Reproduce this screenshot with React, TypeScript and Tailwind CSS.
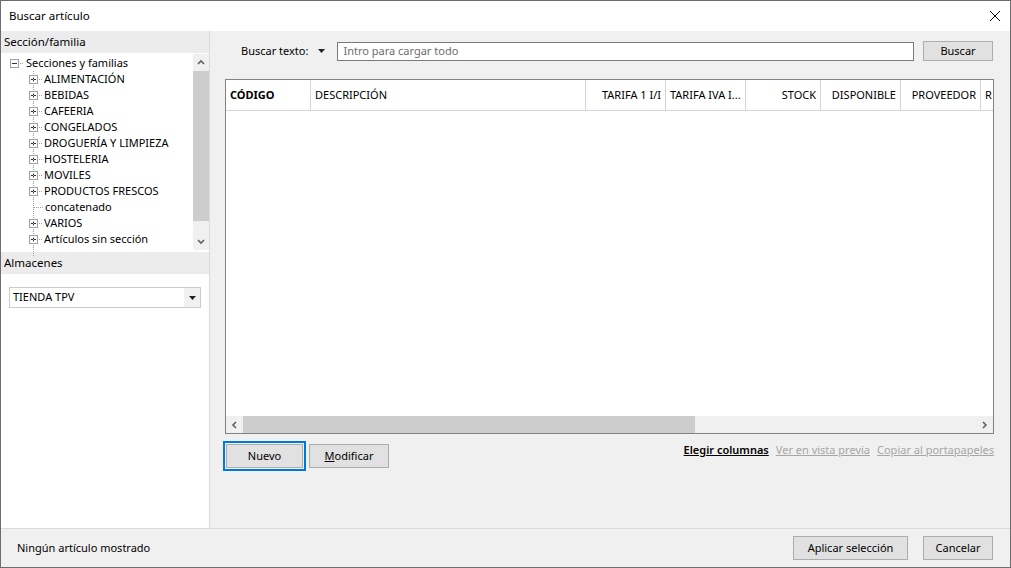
import React from "react";

const font = "font-['Segoe_UI','Noto_Sans',sans-serif]";

const treeItems: { label: string; leaf?: boolean }[] = [
  { label: "ALIMENTACIÓN" },
  { label: "BEBIDAS" },
  { label: "CAFEERIA" },
  { label: "CONGELADOS" },
  { label: "DROGUERÍA Y LIMPIEZA" },
  { label: "HOSTELERIA" },
  { label: "MOVILES" },
  { label: "PRODUCTOS FRESCOS" },
  { label: "concatenado", leaf: true },
  { label: "VARIOS" },
  { label: "Artículos sin sección" },
];

const columns: { label: string; w: string; align: "left" | "right"; bold?: boolean }[] = [
  { label: "CÓDIGO", w: "w-[85px]", align: "left", bold: true },
  { label: "DESCRIPCIÓN", w: "w-[275px]", align: "left" },
  { label: "TARIFA 1 I/I", w: "w-[80px]", align: "right" },
  { label: "TARIFA IVA I...", w: "w-[80px]", align: "left" },
  { label: "STOCK", w: "w-[75px]", align: "right" },
  { label: "DISPONIBLE", w: "w-[80px]", align: "right" },
  { label: "PROVEEDOR", w: "w-[80px]", align: "right" },
];

function Expander({ open }: { open?: boolean }) {
  return (
    <svg width="9" height="9" viewBox="0 0 9 9" className="shrink-0 block">
      <rect x="0.5" y="0.5" width="8" height="8" fill="#fff" stroke="#a0a0a0" />
      <line x1="2" y1="4.5" x2="7" y2="4.5" stroke="#333" />
      {!open && <line x1="4.5" y1="2" x2="4.5" y2="7" stroke="#333" />}
    </svg>
  );
}

function Chevron({ dir }: { dir: "up" | "down" | "left" | "right" }) {
  const d = {
    up: "M1 5 L4 2 L7 5",
    down: "M1 2 L4 5 L7 2",
    left: "M5 1 L2 4 L5 7",
    right: "M2 1 L5 4 L2 7",
  }[dir];
  return (
    <svg width="8" height="8" viewBox="0 0 8 8" className="block">
      <path d={d} fill="none" stroke="#606060" strokeWidth="1.6" />
    </svg>
  );
}

function Caret() {
  return (
    <svg width="7" height="4" viewBox="0 0 7 4" className="block">
      <path d="M0 0 L7 0 L3.5 4 Z" fill="#222" />
    </svg>
  );
}

function Tree() {
  return (
    <div className="flex h-[197px]">
      <div className="relative flex-1 pt-[2px] pl-[9px] text-[11px] text-black leading-[16px]">
        {/* root */}
        <div className="flex items-center h-4">
          <Expander open />
          <span className="w-[3px] border-t border-dotted border-[#a0a0a0] ml-[1px] mr-[3px]" />
          <span>Secciones y familias</span>
        </div>
        <div className="relative">
          <span className="absolute left-[23px] top-0 h-[185px] border-l border-dotted border-[#a0a0a0]" />
          {treeItems.map((it) => (
            <div key={it.label} className="flex items-center h-4 pl-[19px]">
              {it.leaf ? (
                <span className="w-[9px] ml-[5px] border-t border-dotted border-[#a0a0a0]" />
              ) : (
                <>
                  <Expander />
                  <span className="w-[3px] border-t border-dotted border-[#a0a0a0] ml-[1px]" />
                </>
              )}
              <span className="ml-[2px] bg-white relative">{it.label}</span>
            </div>
          ))}
        </div>
      </div>
      <div className="w-[16px] bg-[#f0f0f0] flex flex-col mt-[1px]">
        <div className="h-[17px] flex items-center justify-center">
          <Chevron dir="up" />
        </div>
        <div className="h-[150px] bg-[#cdcdcd]" />
        <div className="flex-1" />
        <div className="h-[17px] flex items-center justify-center">
          <Chevron dir="down" />
        </div>
      </div>
    </div>
  );
}

function Btn({
  children,
  className = "",
}: {
  children: React.ReactNode;
  className?: string;
}) {
  return (
    <div
      className={`flex items-center justify-center bg-[#e1e1e1] border border-[#adadad] text-[11px] text-black ${className}`}
    >
      {children}
    </div>
  );
}

export default function App() {
  return (
    <div
      className={`${font} w-[1011px] h-[568px] flex flex-col border border-[#6d6d6d] bg-[#f0f0f0] overflow-hidden`}
    >
      {/* Title bar */}
      <div className="h-[30px] bg-white flex items-center justify-between pl-[8px] pr-[9px] shrink-0">
        <span className="text-[11.5px] text-black">Buscar artículo</span>
        <svg width="12" height="12" viewBox="0 0 12 12">
          <path d="M1 1 L11 11 M11 1 L1 11" stroke="#111" strokeWidth="1" />
        </svg>
      </div>

      {/* Body */}
      <div className="flex flex-1 min-h-0">
        {/* Left panel */}
        <div className="w-[209px] bg-white border-r border-[#dadada] flex flex-col shrink-0">
          <div className="h-[22px] bg-[#ececec] flex items-center pl-[3px] text-[11.5px] text-black">
            Sección/familia
          </div>
          <Tree />
          <div className="h-[22px] mt-[2px] bg-[#ececec] flex items-center pl-[3px] text-[11.5px] text-black">
            Almacenes
          </div>
          <div className="pt-[13px] pl-[8px] pr-[8px]">
            <div className="h-[21px] border border-[#cccccc] flex items-center bg-white">
              <span className="flex-1 pl-[3px] text-[11px] text-black">TIENDA TPV</span>
              <div className="w-[16px] h-full bg-[#f0f0f0] flex items-center justify-center">
                <Caret />
              </div>
            </div>
          </div>
        </div>

        {/* Right panel */}
        <div className="flex-1 flex flex-col pt-[10px] pl-[15px] pr-[16px]">
          {/* search row */}
          <div className="flex items-center h-[20px]">
            <span className="ml-[16px] text-[11px] text-black">Buscar texto:</span>
            <span className="ml-[10px] mr-[12px] flex items-center">
              <Caret />
            </span>
            <div className="flex-1 h-[19px] border border-[#7a7a7a] bg-white flex items-center pl-[5px] text-[11px] text-[#6d6d6d]">
              Intro para cargar todo
            </div>
            <Btn className="ml-[9px] mr-[1px] w-[70px] h-[20px]">Buscar</Btn>
          </div>

          {/* table */}
          <div className="mt-[18px] h-[355px] border border-[#828282] bg-white flex flex-col">
            <div className="h-[31px] border-b border-[#d5d5d5] flex text-[11px] text-black overflow-hidden whitespace-nowrap">
              {columns.map((c) => (
                <div
                  key={c.label}
                  className={`${c.w} shrink-0 h-full border-r border-[#d5d5d5] flex items-center px-[4px] overflow-hidden ${
                    c.align === "right" ? "justify-end" : "justify-start"
                  } ${c.bold ? "font-bold" : ""}`}
                >
                  {c.label}
                </div>
              ))}
              <div className="flex items-center pl-[4px]">R</div>
            </div>
            <div className="flex-1" />
            <div className="h-[17px] bg-[#f0f0f0] flex items-center">
              <div className="w-[17px] h-full flex items-center justify-center">
                <Chevron dir="left" />
              </div>
              <div className="w-[452px] h-full bg-[#cdcdcd]" />
              <div className="flex-1" />
              <div className="w-[17px] h-full flex items-center justify-center">
                <Chevron dir="right" />
              </div>
            </div>
          </div>

          {/* button row */}
          <div className="mt-[7px] flex items-start">
            <div className="-ml-[2px] border-2 border-[#0078d7] p-[1px]">
              <Btn className="w-[77px] h-[24px] text-[#333]">Nuevo</Btn>
            </div>
            <Btn className="ml-[3px] mt-[3px] w-[80px] h-[24px] text-[#333]">
              <span>
                <span className="underline">M</span>odificar
              </span>
            </Btn>
            <div className="ml-auto mt-[1px] flex gap-[7px] text-[11px] leading-[16px]">
              <span className="underline font-semibold text-black">Elegir columnas</span>
              <span className="underline text-[#a6a6a6]">Ver en vista previa</span>
              <span className="underline text-[#a6a6a6]">Copiar al portapapeles</span>
            </div>
          </div>
        </div>
      </div>

      {/* Status bar */}
      <div className="h-[39px] shrink-0 border-t border-[#dadada] flex items-center pl-[16px] pr-[17px]">
        <span className="text-[11px] text-black">Ningún artículo mostrado</span>
        <Btn className="ml-auto w-[115px] h-[24px] text-[#6d6d6d]">Aplicar selección</Btn>
        <Btn className="ml-[15px] w-[70px] h-[24px]">Cancelar</Btn>
      </div>
    </div>
  );
}
